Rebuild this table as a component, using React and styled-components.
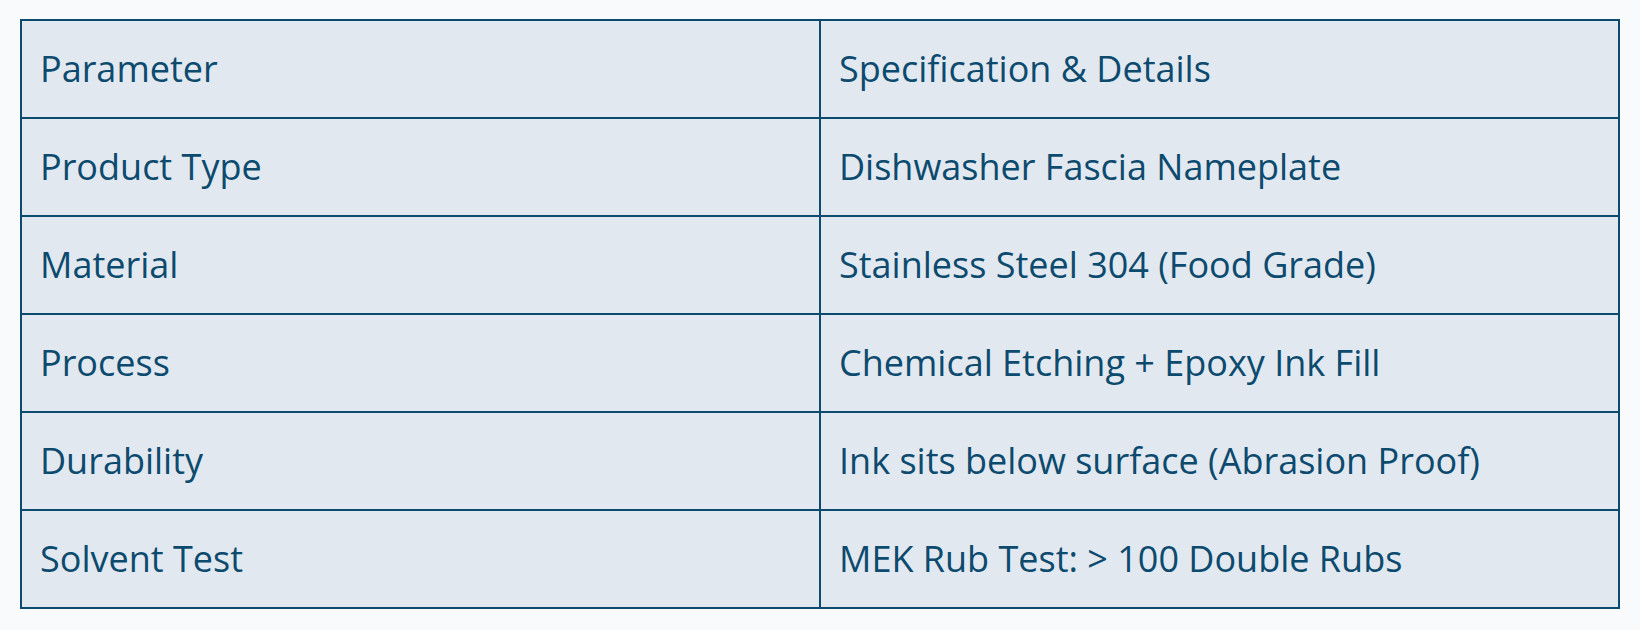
import React from "react";
import styled, { createGlobalStyle } from "styled-components";

const rows = [
  ["Parameter", "Specification & Details"],
  ["Product Type", "Dishwasher Fascia Nameplate"],
  ["Material", "Stainless Steel 304 (Food Grade)"],
  ["Process", "Chemical Etching + Epoxy Ink Fill"],
  ["Durability", "Ink sits below surface (Abrasion Proof)"],
  ["Solvent Test", "MEK Rub Test: > 100 Double Rubs"],
];

export default function App() {
  return (
    <Page>
      <GlobalStyle />
      <SpecTable>
        <tbody>
          {rows.map(([param, spec]) => (
            <tr key={param}>
              <Cell>{param}</Cell>
              <Cell>{spec}</Cell>
            </tr>
          ))}
        </tbody>
      </SpecTable>
    </Page>
  );
}

const GlobalStyle = createGlobalStyle`
  body {
    margin: 0;
    background: #f8fafc;
    font-family: "Open Sans", "Noto Sans", sans-serif;
  }
`;

const Page = styled.div`
  padding: 19px 20px;
  min-height: 630px;
  box-sizing: border-box;
  background: #f8fafc;
`;

const SpecTable = styled.table`
  width: 1600px;
  border-collapse: collapse;
  border: 2px solid #0c4a6e;
  background: #e2e8f0;
  table-layout: fixed;
`;

const Cell = styled.td`
  border: 2px solid #0c4a6e;
  padding: 20px 19px 20px 18px;
  font-size: 36px;
  line-height: 56px;
  color: #0c4a6e;
  text-align: left;
  vertical-align: middle;
`;
